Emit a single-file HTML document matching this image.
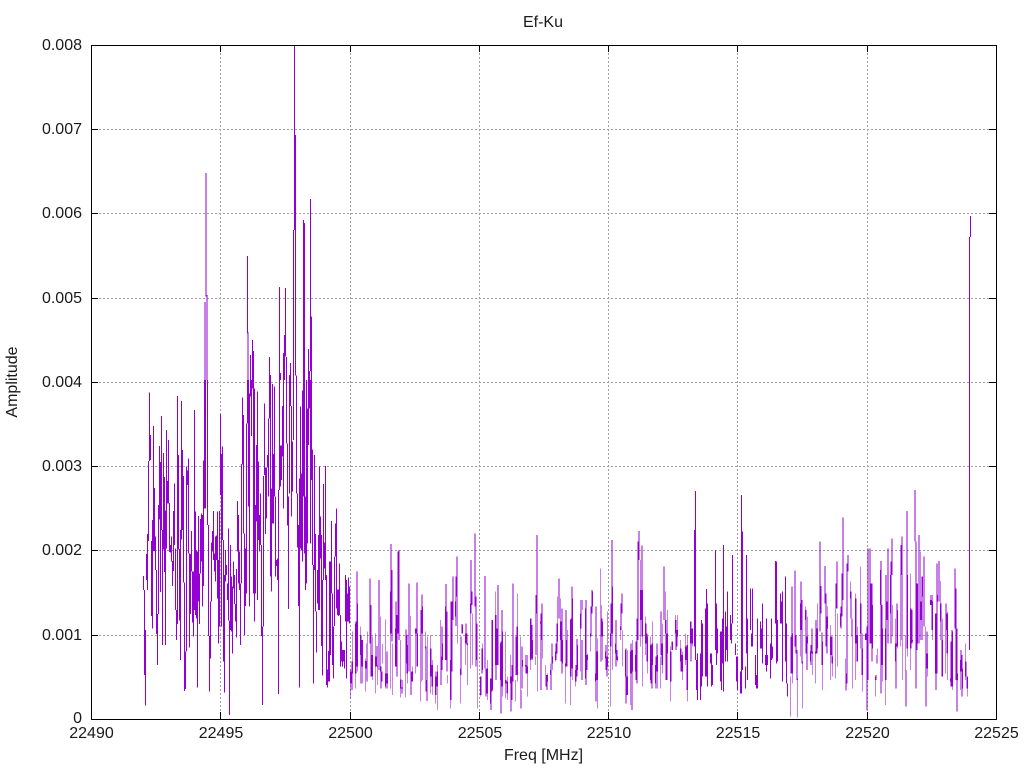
<!DOCTYPE html>
<html>
<head>
<meta charset="utf-8">
<title>Ef-Ku</title>
<style>
html,body{margin:0;padding:0;background:#fff;width:1024px;height:768px;overflow:hidden}
svg{display:block}
text{font-family:"Liberation Sans",sans-serif;font-size:16px;fill:#1a1a1a}
</style>
</head>
<body>
<svg width="1024" height="768" viewBox="0 0 1024 768" xmlns="http://www.w3.org/2000/svg">
<defs>
<mask id="thin" maskUnits="userSpaceOnUse" x="0" y="0" width="1024" height="768">
<line x1="350" y1="384" x2="1000" y2="384" stroke="#fff" stroke-width="768" stroke-dasharray="3 2" shape-rendering="crispEdges"/>
</mask>
</defs>
<rect width="1024" height="768" fill="#fff"/>
<g stroke="#a0a0a0" stroke-width="1" fill="none" stroke-dasharray="2 2" shape-rendering="crispEdges">
<path d="M91 129.500H996M91 213.500H996M91 298.500H996M91 382.500H996M91 466.500H996M91 550.500H996M91 635.500H996"/>
<path d="M220.500 45V719M350.500 45V719M479.500 45V719M608.500 45V719M737.500 45V719M867.500 45V719"/>
</g>
<g fill="none" stroke="#9400d3" shape-rendering="crispEdges">
<!-- tall peaks, upper area -->
<path transform="matrix(.33333 0 0 .33333 130 40)" stroke-width="3" d="M225 786V1020M228 399V770M231 765V1020M352 648V880M354 876V1020M361 945V1020M367 900V1020M370 933V1020M418 951V1020M421 1005V1020M448 741V1020M451 999V1020M460 939V1020M463 885V1020M466 744V950M469 951V1020M478 1005V1020M481 969V1020M490 570V1020M493 17V570M496 285V1007M499 1007V1020M520 540V1020M523 549V1020M535 927V1020M538 993V1020M541 477V993M544 830V1020"/>
<!-- 143..350 -->
<path transform="matrix(.33333 0 0 .33333 130 380)" stroke-width="3" d="M40 588V630M44 630V885M46 750V977M49 522V600M52 462V630M55 243V483M58 37V243M61 165V240M64 483V708M67 420V746M70 138V513M73 324V513M76 470V570M79 570V762M82 702V855M85 375V702M88 198V418M91 246V636M94 108V450M97 450V795M100 219V508M103 291V576M106 392V795M109 150V505M112 303V370M115 180V370M118 369V516M121 495V518M124 470V545M127 543V618M130 393V573M133 310V495M136 505V690M139 690V780M142 48V732M145 225V508M148 507V722M151 450V840M154 63V478M157 210V450M160 288V608M163 608V933M166 815V927M169 260V815M172 272V315M175 235V520M178 520V803M181 522V702M184 453V575M187 575V728M190 575V770M193 90V690M196 395V705M199 512V716M202 515V923M205 408V665M208 580V732M211 417V580M214 400V545M217 405V680M220 242V618M223 0V385M226 0V385M232 0V435M235 435V768M238 768V935M241 665V835M244 487V665M247 453V515M250 393V540M253 520V575M256 470V605M259 467V540M262 395V655M265 540V790M268 393V740M271 102V345M274 222V740M277 200V480M280 480V845M283 585V938M286 510V605M289 555V585M292 610V660M295 445V722M298 722V1005M301 495V750M304 590V755M307 620V820M310 545V625M313 585V672M316 672V725M319 567V773M322 363V515M325 405V610M328 515V630M331 610V795M334 252V610M337 53V253M340 105V460M343 460V765M346 505V678M349 130V640M352 0V130M355 0V380M358 40V680M361 0V50M364 0V168M367 0V25M370 0V640M373 25V725M376 375V640M379 195V425M382 35V660M385 245V480M388 405V515M391 340V495M394 495V768M397 740V975M400 288V740M403 70V285M406 262V462M409 262V415M412 225V262M415 115V350M418 0V115M421 0V590M424 325V635M427 12V430M430 222V430M433 20V350M436 350V590M439 540V558M442 535V600M445 330V942M448 0V330M451 197V320M454 197V300M457 78V230M460 0V385M469 0V190M472 190V437M475 350V687M478 0V340M481 0V78M484 78V410M487 185V335M490 0V180M499 0V340M502 340V502M505 435V678M508 295V922M511 80V505M514 280V512M517 32V545M520 0V350M523 0V520M526 350V630M529 0V610M532 85V490M535 0V195M538 0V85M541 0V490M544 0V300M547 208V555M550 555V910M553 225V570M556 462V695M559 695V818M562 570V670M565 465V690M568 260V690M571 410V535M574 465V798M577 600V887M580 312V600M583 487V565M586 258V600M589 585V915M592 868V922M595 813V905M598 545V905M601 545V825M604 423V640M607 640V855M610 740V895M613 530V738M616 430V530M619 385V685M622 628V705M625 628V708M628 550V705M631 705V860M634 785V845M637 810V860M640 810V845M643 810V865M646 585V725M649 600V895M652 640V725M655 592V725M658 620V730"/>
<g mask="url(#thin)">
<!-- 350..570 -->
<path transform="matrix(.33333 0 0 .33333 340 500)" stroke-width="3" d="M30 505V595M33 515V550M36 485V570M39 395V520M42 410V445M45 370V565M48 365V520M51 215V500M54 310V515M57 260V380M60 380V465M63 405V550M66 420V500M69 420V550M72 460V627M75 475V575M78 483V505M81 430V545M84 395V430M87 335V430M90 235V430M93 315V530M96 465V530M99 410V540M102 475V540M105 400V580M108 470V500M111 438V500M114 497V555M117 240V510M120 350V515M123 500V565M126 515V545M129 432V490M132 400V480M135 358V560M138 520V565M141 455V550M144 520V565M147 490V590M150 275V565M153 132V400M156 210V425M159 430V585M162 528V595M165 385V500M168 305V500M171 345V530M174 155V400M177 150V420M180 420V593M183 538V565M186 562V580M189 540V565M192 535V565M195 490V592M198 388V490M201 405V520M204 435V550M207 250V515M210 348V515M213 515V585M216 515V545M219 500V545M222 505V520M225 385V520M228 385V400M231 247V500M234 400V500M237 495V600M240 545V605M243 330V545M246 283V400M249 320V540M252 400V555M255 395V445M258 440V575M261 540V603M264 410V540M267 440V500M270 405V580M273 445V530M276 495V560M279 480V585M282 425V560M285 515V610M288 530V585M291 515V560M294 495V630M297 402V580M300 360V470M303 470V555M306 380V510M309 430V480M312 480V560M315 320V480M318 252V480M321 335V515M324 525V550M327 440V610M330 480V625M333 305V600M336 305V515M339 230V360M342 275V420M345 305V350M348 230V378M351 170V290M354 290V430M357 430V615M360 505V610M363 410V525M366 372V400M369 375V400M372 340V525M375 400V495M378 370V430M381 400V435M384 430V555M387 525V580M390 310V505M393 180V340M396 275V315M399 340V495M402 440V550M405 100V320M408 290V500M411 370V480M414 480V625M417 500V610M420 530V590M423 530V585M426 445V520M429 430V510M432 350V620M435 228V505M438 505V590M441 505V580M444 480V600M447 480V605M450 535V610M453 535V630M456 360V575M459 360V570M462 305V345M465 275V495M468 345V540M471 385V495M474 255V495M477 280V495M480 430V540M483 425V640M486 330V560M489 395V590M492 560V590M495 395V595M498 540V550M501 545V580M504 530V600M507 360V600M510 465V550M513 530V635M516 495V600M519 250V545M522 305V600M525 540V605M528 410V525M531 380V525M534 280V545M537 370V580M540 410V570M543 570V625M546 440V565M549 480V500M552 495V520M555 465V500M558 495V520M561 465V520M564 500V590M567 450V630M570 355V510M573 355V480M576 375V475M579 420V480M582 480V490M585 470V495M588 285V465M591 105V340M594 340V575M597 365V375M600 365V370M603 340V570M606 310V420M609 420V475M612 445V570M615 495V525M618 525V560M621 525V570M624 520V545M627 545V595M630 490V525M633 510V570M636 430V510M639 470V490M642 430V480M645 455V485M648 430V480M651 370V460M654 290V425M657 235V355M660 295V420M663 365V485M666 325V520M669 420V490M672 420V490M675 490V610M678 330V500M681 420V500M684 390V420M687 395V500"/>
<!-- 570..790 -->
<path transform="matrix(.33333 0 0 .33333 560 480)" stroke-width="3" d="M30 420V675M33 415V590M36 320V565M39 355V600M42 600V660M45 570V620M48 555V605M51 477V590M54 495V570M57 405V445M60 400V575M63 360V445M66 480V600M69 360V390M72 390V430M75 385V595M78 360V615M81 525V570M84 520V540M87 490V520M90 460V515M93 380V470M96 330V400M99 335V380M102 270V600M105 580V605M108 380V665M111 515V600M114 475V685M117 305V475M120 265V375M123 375V545M126 415V470M129 425V540M132 515V600M135 515V535M138 495V570M141 530V590M144 395V560M147 470V540M150 460V680M153 370V500M156 180V460M159 320V570M162 545V575M165 490V520M168 420V560M171 510V540M174 530V545M177 440V490M180 440V480M183 370V450M186 340V400M189 450V560M192 480V510M195 510V590M198 505V670M201 590V645M204 512V645M207 590V630M210 515V675M213 490V580M216 510V690M219 480V575M222 520V600M225 525V575M228 485V600M231 415V610M234 185V480M237 153V240M240 240V500M243 330V420M246 197V470M249 330V620M252 425V525M255 410V525M258 430V490M261 460V545M264 470V580M267 355V530M270 470V600M273 495V610M276 490V625M279 425V555M282 560V660M285 555V610M288 530V625M291 490V575M294 525V625M297 515V570M300 530V625M303 395V525M306 490V555M309 430V580M312 260V420M315 335V460M318 420V600M321 460V600M324 390V520M327 380V505M330 500V665M333 515V605M336 485V510M339 485V510M342 410V470M345 405V460M348 420V510M351 450V500M354 405V470M357 445V490M360 480V545M363 505V575M366 525V575M369 515V600M372 460V530M375 460V555M378 500V540M381 495V630M384 465V665M387 410V540M390 425V490M393 425V545M396 445V490M399 445V500M403 150V500M406 33V540M409 540V630M412 520V660M415 385V630M418 520V630M421 520V660M424 420V620M427 430V590M430 430V520M433 435V490M436 385V590M439 327V590M442 370V620M445 520V620M448 580V590M451 520V550M454 520V620M457 555V615M460 465V550M463 350V555M466 210V510M469 370V555M472 445V520M475 460V510M478 380V490M481 455V605M484 455V630M487 415V550M490 195V635M493 305V415M496 395V545M499 440V510M502 335V545M505 395V500M508 440V475M511 405V480M514 430V490M517 225V430M520 260V400M523 405V550M526 490V525M529 530V605M532 530V630M535 505V620M538 600V635M541 575V640M544 45V640M547 155V570M550 570V610M553 520V610M556 560V625M559 225V520M562 415V600M565 325V500M568 290V500M571 325V450M574 460V500M577 325V500M580 370V615M583 460V590M586 525V615M589 585V625M592 415V625M595 520V625M598 525V620M601 425V505M604 445V505M607 370V550M610 370V470M613 470V590M616 525V555M619 415V575M622 525V555M625 318V490M628 405V555M631 490V595M634 415V540M637 500V535M640 430V510M643 370V510M646 243V430M649 245V550M652 420V545M655 540V610M658 315V550M661 340V430M664 365V430M667 335V605M670 600V660M673 430V610M676 290V545M679 430V610M682 610V650M685 615V640M688 615V665"/>
<!-- 790..970 -->
<path transform="matrix(.33333 0 0 .33333 780 480)" stroke-width="3" d="M30 590V710M33 470V580M36 320V580M39 460V610M42 395V560M45 272V500M48 465V520M51 510V600M54 595V712M57 515V620M60 370V530M63 305V450M66 360V550M69 545V685M72 405V560M75 380V420M78 390V520M81 470V570M84 410V490M87 432V590M90 515V545M93 495V555M96 445V520M99 515V585M102 580V615M105 515V610M108 420V520M111 445V520M114 370V505M117 360V450M120 185V455M123 318V400M126 458V555M129 485V630M132 305V490M135 258V370M138 340V500M141 410V520M144 380V445M147 420V465M150 435V600M153 470V525M156 470V550M159 530V590M162 500V605M165 385V595M168 310V385M171 245V385M174 400V560M177 395V435M180 400V440M183 380V445M186 280V410M189 113V360M192 360V535M195 535V580M198 580V632M201 250V610M204 225V275M207 275V500M210 305V355M213 335V415M216 415V470M219 470V625M222 350V475M225 340V600M228 355V490M231 465V545M234 440V545M237 370V655M240 260V460M243 370V505M246 505V585M249 460V635M252 460V500M255 460V480M258 460V480M261 440V690M264 205V600M267 255V340M270 205V490M273 310V490M276 310V545M279 375V505M282 505V590M285 590V650M288 585V600M291 525V550M294 505V525M297 430V625M300 270V375M303 243V640M306 375V555M309 445V605M312 360V505M315 445V675M318 285V600M321 365V420M324 205V490M327 365V400M330 285V400M333 245V490M336 175V285M339 375V470M342 465V545M345 415V545M348 490V625M351 370V500M354 390V505M357 485V500M360 285V500M363 195V285M366 170V480M369 480V600M372 540V615M375 465V570M378 570V680M381 93V505M384 285V530M387 445V490M390 280V570M393 385V505M396 390V490M399 480V485M402 200V480M405 30V185M408 185V625M411 310V510M414 310V490M417 165V490M420 215V480M423 365V420M426 290V480M429 290V350M432 230V440M435 440V520M438 520V680M441 455V565M444 520V590M447 315V510M450 345V375M453 360V375M456 345V450M459 365V480M462 440V480M465 400V580M468 400V630M471 250V580M474 345V365M477 243V365M480 303V425M483 370V480M486 480V590M489 415V590M492 525V630M495 450V580M498 370V450M501 400V520M504 395V600M507 395V670M510 595V605M513 485V620M516 450V620M519 455V630M522 445V625M525 265V445M528 325V600M531 445V695M534 580V600M537 570V655M540 540V630M543 510V575M546 525V650M549 565V625M552 520V650M555 490V600M558 545V590M561 590V625M564 590V650M567 505V590"/>
</g>
<!-- tall peaks kept through the thinning -->
<path transform="matrix(.33333 0 0 .33333 340 500)" stroke-width="3" d="M51 215V500M90 235V430M117 240V510M153 132V400M174 155V400M177 150V420M207 250V515M231 247V500M318 252V480M339 230V360M348 230V378M351 170V290M393 180V340M405 100V320M435 228V505M474 255V495M519 250V545M591 105V340M657 235V355"/>
<path transform="matrix(.33333 0 0 .33333 560 480)" stroke-width="3" d="M156 180V460M234 185V480M237 153V240M246 197V470M312 260V420M403 150V500M406 33V540M466 210V510M490 195V635M517 225V430M544 45V640M547 155V570M559 225V520M646 243V430M649 245V550"/>
<path transform="matrix(.33333 0 0 .33333 780 480)" stroke-width="3" d="M45 272V500M120 185V455M135 258V370M171 245V385M189 113V360M201 250V610M204 225V275M264 205V600M270 205V490M303 243V640M324 205V490M333 245V490M336 175V285M366 170V480M381 93V505M405 30V185M417 165V490M432 230V440M471 250V580M477 243V365M525 265V445"/>
<path stroke-width="1" d="M969.500 237V650M970.500 216V237"/>
</g>
<g stroke="#000" stroke-width="1" fill="none" shape-rendering="crispEdges">
<path d="M91.500 45.500H996.500V719.500H91.500Z"/>
<path d="M91 129.500H98M91 213.500H98M91 298.500H98M91 382.500H98M91 466.500H98M91 550.500H98M91 635.500H98"/>
<path d="M996 129.500H989M996 213.500H989M996 298.500H989M996 382.500H989M996 466.500H989M996 550.500H989M996 635.500H989"/>
<path d="M220.500 45V52M350.500 45V52M479.500 45V52M608.500 45V52M737.500 45V52M867.500 45V52"/>
<path d="M220.500 719V712M350.500 719V712M479.500 719V712M608.500 719V712M737.500 719V712M867.500 719V712"/>
</g>
<g text-anchor="end">
<text x="82" y="50">0.008</text>
<text x="82" y="134">0.007</text>
<text x="82" y="218">0.006</text>
<text x="82" y="303">0.005</text>
<text x="82" y="387">0.004</text>
<text x="82" y="471">0.003</text>
<text x="82" y="555">0.002</text>
<text x="82" y="640">0.001</text>
<text x="82" y="723">0</text>
</g>
<g text-anchor="middle">
<text x="91.500" y="738">22490</text>
<text x="221" y="738">22495</text>
<text x="350.500" y="738">22500</text>
<text x="480" y="738">22505</text>
<text x="609" y="738">22510</text>
<text x="738" y="738">22515</text>
<text x="867.500" y="738">22520</text>
<text x="996.500" y="738">22525</text>
<text x="543.500" y="760">Freq [MHz]</text>
<text x="543" y="27">Ef-Ku</text>
<text transform="translate(17 382) rotate(-90)">Amplitude</text>
</g>
</svg>
</body>
</html>
